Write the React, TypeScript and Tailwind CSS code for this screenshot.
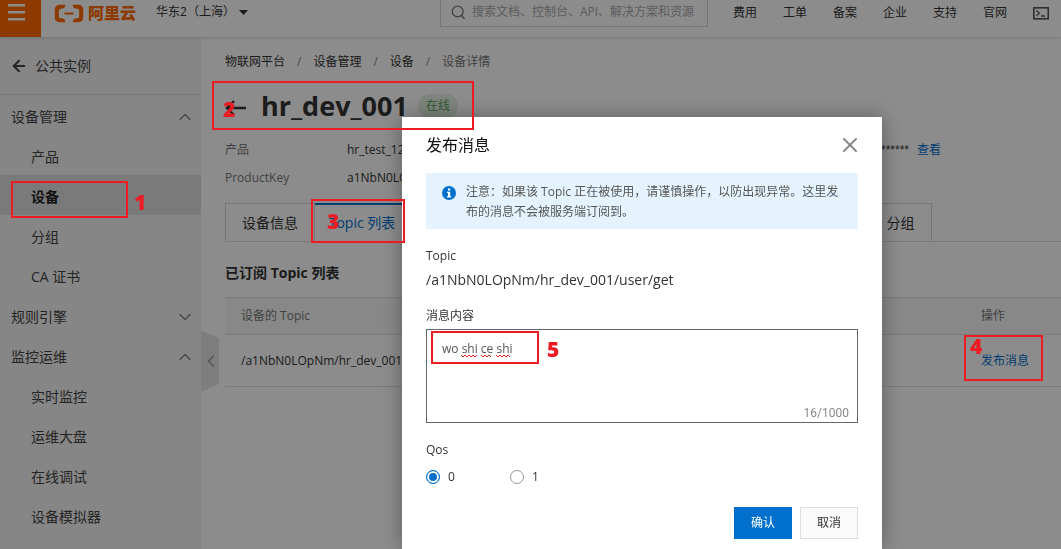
import React, { useState } from "react";
import clsx from "clsx";
import { ArrowLeft, ChevronDown, ChevronLeft, ChevronUp, X } from "lucide-react";

const topLinks = ["费用", "工单", "备案", "企业", "支持", "官网"];

const menu = [
	{ name: "设备管理", open: true, items: ["产品", "设备", "分组", "CA 证书"] },
	{ name: "规则引擎", open: false, items: [] },
	{
		name: "监控运维",
		open: true,
		items: ["实时监控", "运维大盘", "在线调试", "设备模拟器"],
	},
];

const breadcrumbs = ["物联网平台", "设备管理", "设备"];

const marks = [
	{
		label: "1",
		box: "left-[11px] top-[181px] w-[117px] h-[37px]",
		text: "left-[134px] top-[192px]",
	},
	{
		label: "2",
		box: "left-[212px] top-[81px] w-[262px] h-[49px]",
		text: "left-[223px] top-[99px]",
	},
	{
		label: "3",
		box: "left-[311px] top-[199px] w-[94px] h-[44px]",
		text: "left-[327px] top-[211px]",
	},
	{
		label: "4",
		box: "left-[964px] top-[335px] w-[79px] h-[46px]",
		text: "left-[970px] top-[336px]",
	},
	{
		label: "5",
		box: "left-[431px] top-[331px] w-[108px] h-[33px]",
		text: "left-[547px] top-[339px]",
	},
];

const Logo = () => (
	<a href="#" className="ml-[13px] flex h-6 items-center gap-1 text-[#ff6a00]">
		<svg width="30" height="19" viewBox="0 0 30 19" fill="none" className="mt-[2px]">
			<path
				d="M11.5 0.8H5.5C2.8 0.8 0.8 2.7 0.8 5.2V13.8C0.8 16.3 2.8 18.2 5.5 18.2H11.5L10.2 14.9L6.2 14C5.3 13.8 4.9 13.2 4.9 12.4V6.6C4.9 5.8 5.3 5.2 6.2 5L10.2 4.1Z"
				fill="currentColor"
			/>
			<path
				d="M18.5 0.8H24.5C27.2 0.8 29.2 2.7 29.2 5.2V13.8C29.2 16.3 27.2 18.2 24.5 18.2H18.5L19.8 14.9L23.8 14C24.7 13.8 25.1 13.2 25.1 12.4V6.6C25.1 5.8 24.7 5.2 23.8 5L19.8 4.1Z"
				fill="currentColor"
			/>
			<path d="M10.5 9.5H19.5" stroke="currentColor" strokeWidth="2" />
		</svg>
		<span className="pt-px text-base font-black leading-6">阿里云</span>
	</a>
);

const Header = () => (
	<header className="relative z-10 flex h-[37px] shrink-0 items-start bg-white text-xs text-[#333] shadow-[0_1px_4px_rgba(0,0,0,0.15)]">
		<button
			aria-label="菜单"
			className="flex h-[37px] w-[41px] justify-center bg-[#ff6a00] pt-1 pr-2 text-white"
		>
			<svg width="17" height="17" viewBox="0 0 17 17" fill="currentColor">
				<path d="M0 0h17v2.5H0zM0 7h17v2.5H0zM0 14h17v2.5H0z" />
			</svg>
		</button>
		<Logo />
		<button className="ml-5 flex h-6 items-center gap-1">
			华东2（上海）
			<svg width="9" height="5" viewBox="0 0 9 5" fill="currentColor">
				<path d="M0 0h9L4.5 5z" />
			</svg>
		</button>
		<label className="ml-auto flex h-[27px] w-[268px] items-center gap-[6px] border border-t-0 border-[#d5d5d5] pb-[2px] pl-[10px] text-[#777]">
			<svg width="15" height="15" viewBox="0 0 15 15" fill="none" stroke="currentColor" strokeWidth="1.3">
				<circle cx="6.7" cy="6.5" r="5.4" />
				<path d="M10.5 10.5L13.5 14" />
			</svg>
			<input
				aria-label="搜索"
				placeholder="搜索文档、控制台、API、解决方案和资源"
				className="min-w-0 flex-1 outline-none placeholder:text-[#aaa]"
			/>
		</label>
		<nav className="ml-[25px] flex h-6 items-center gap-[26px] pt-[2px] pr-3">
			{topLinks.map((link) => (
				<a key={link} href="#">
					{link}
				</a>
			))}
			<a href="#" aria-label="命令行" className="text-[#555]">
				<svg width="16" height="13" viewBox="0 0 16 13" fill="none" stroke="currentColor">
					<rect x="0.8" y="0.8" width="14.4" height="11" strokeWidth="1.6" />
					<path d="M3.5 3.5L6.3 6.2L3.5 8.9M8 9h4" strokeWidth="1.3" />
				</svg>
			</a>
		</nav>
	</header>
);

const Sidebar = () => (
	<aside className="relative w-[201px] shrink-0 bg-[#f4f4f4] text-sm text-[#444]">
		<a
			href="#"
			className="flex h-[58px] items-center gap-[7px] border-b border-[#d8d8d8] pl-[10px]"
		>
			<ArrowLeft size={18} strokeWidth={2.6} />
			公共实例
		</a>
		{menu.map((group) => (
			<div key={group.name}>
				<button className="flex h-10 w-full items-center justify-between pt-1 pr-[6px] pl-[11px]">
					{group.name}
					{group.open ? (
						<ChevronUp size={20} strokeWidth={1.8} className="text-[#888]" />
					) : (
						<ChevronDown size={20} strokeWidth={1.8} className="text-[#888]" />
					)}
				</button>
				{group.items.map((item) => (
					<a
						key={item}
						href="#"
						className={clsx(
							"flex h-10 items-center pt-1 pl-[31px]",
							item === "设备" && "bg-[#dedede] font-bold text-[#222]"
						)}
					>
						{item}
					</a>
				))}
			</div>
		))}
		<button
			aria-label="收起"
			className="absolute top-[293px] left-full h-[62px] w-[18px] text-[#999]"
		>
			<svg width="18" height="62" viewBox="0 0 18 62" className="absolute inset-0">
				<path d="M0 0L18 8V54L0 62Z" fill="#e6e6e6" />
			</svg>
			<ChevronLeft size={20} strokeWidth={1.8} className="relative" />
		</button>
	</aside>
);

const DevicePage = () => (
	<main className="min-w-0 flex-1 bg-white pl-6 text-xs text-[#333]">
		<nav className="flex h-[50px] items-center gap-3">
			{breadcrumbs.map((crumb) => (
				<React.Fragment key={crumb}>
					<a href="#">{crumb}</a>
					<span className="text-[#888]">/</span>
				</React.Fragment>
			))}
			<span className="text-[#777]">设备详情</span>
		</nav>
		<div className="flex h-[38px] items-center gap-[10px]">
			<a href="#" aria-label="返回" className="mt-1 mr-1">
				<svg width="22" height="16" viewBox="0 0 22 16" fill="none" stroke="currentColor" strokeWidth="2.4">
					<path d="M9 1L2 8L9 15M2 8H21" />
				</svg>
			</a>
			<h1 className="text-[27px] leading-[38px] font-bold">hr_dev_001</h1>
			<span className="flex h-6 items-center rounded-full bg-[#e3f2e3] px-2 text-[#5aa65a]">
				在线
			</span>
		</div>
		<div className="mt-[11px] flex pr-30 leading-7">
			<dl className="grid grid-cols-[122px_auto]">
				<dt className="text-[#777]">产品</dt>
				<dd>hr_test_122</dd>
				<dt className="text-[#777]">ProductKey</dt>
				<dd>a1NbN0LO</dd>
			</dl>
			<p className="ml-auto">
				<span className="font-['Liberation_Sans']">********</span>
				<a href="#" className="ml-2 text-[#0070cc]">
					查看
				</a>
			</p>
		</div>
		<div className="mt-[11px] flex h-[39px] border-b border-[#dedede] text-sm">
			<button className="border border-b-0 border-[#d5d5d5] px-4">
				设备信息
			</button>
			<button className="w-[94px] border-t-2 border-[#0070cc] text-[#0070cc]">
				Topic 列表
			</button>
			<div className="w-[461px] border border-b-0 border-[#d5d5d5]" />
			<button className="w-[62px] border border-b-0 border-l-0 border-[#d5d5d5]">
				分组
			</button>
		</div>
		<h2 className="pt-[21px] pb-[14px] text-sm font-bold">
			已订阅 Topic 列表
		</h2>
		<table className="w-full table-fixed border-t border-[#dedede] text-left">
			<thead>
				<tr className="h-[37px] border-b border-[#dedede] bg-[#f8f8f8] text-[#777]">
					<th className="pl-4 font-normal">设备的 Topic</th>
					<th className="w-24 pl-4 font-normal">操作</th>
				</tr>
			</thead>
			<tbody>
				<tr className="h-[52px] border-b border-[#dedede]">
					<td className="pl-4">/a1NbN0LOpNm/hr_dev_001/user/get</td>
					<td className="pl-4">
						<a href="#" className="text-[#0070cc]">
							发布消息
						</a>
					</td>
				</tr>
			</tbody>
		</table>
	</main>
);

const PublishModal = () => {
	const [message, setMessage] = useState<string>("wo shi ce shi");
	const [qos, setQos] = useState<number>(0);

	return (
		<div className="fixed inset-0 z-20 flex bg-black/45 pt-[117px] pl-[402px]">
			<div
				role="dialog"
				aria-label="发布消息"
				className="w-[480px] bg-white px-6 pt-4 text-xs text-[#333] shadow-[0_0_20px_rgba(0,0,0,0.35)]"
			>
				<div className="flex h-6 items-center justify-between text-base text-[#111]">
					<h2>发布消息</h2>
					<button aria-label="关闭" className="-mr-1 text-[#888]">
						<X size={24} strokeWidth={2} />
					</button>
				</div>
				<div className="mt-4 flex gap-[10px] bg-[#e4f3fe] px-4 pt-[9px] pb-[7px] leading-5 text-[#555]">
					<svg width="14" height="14" viewBox="0 0 14 14" className="mt-1 shrink-0">
						<circle cx="7" cy="7" r="7" fill="#0070cc" />
						<path d="M6 2.5h2.2v2H6zM5 5.7h3.2v4.5H9.3v1.3H4.9v-1.3H6V7H5z" fill="#fff" />
					</svg>
					<p>
						注意：如果该 Topic 正在被使用，请谨慎操作，以防出现异常。这里发布的消息不会被服务端订阅到。
					</p>
				</div>
				<p className="mt-[17px] leading-5">Topic</p>
				<p className="mt-1 text-sm leading-5">
					/a1NbN0LOpNm/hr_dev_001/user/get
				</p>
				<label htmlFor="message" className="mt-4 block leading-5">
					消息内容
				</label>
				<div className="relative mt-[3px]">
					<textarea
						id="message"
						spellCheck={false}
						value={message}
						onChange={(e) => setMessage(e.target.value)}
						className="block h-[94px] w-full resize-none border border-[#666] px-[15px] py-[9px] leading-5 text-[#555] outline-none"
					/>
					<svg
						width="52"
						height="4"
						viewBox="0 0 52 4"
						fill="none"
						stroke="#e02020"
						className="absolute top-[25px] left-[35px]"
					>
						<path d="M0 1l2 2 2-2 2 2 2-2 2 2 2-2 2 2 2-2M20 1l2 2 2-2 2 2 2-2 2 2M35 1l2 2 2-2 2 2 2-2 2 2 2-2 2 2" />
					</svg>
					<span className="absolute right-[9px] bottom-0 font-[Roboto] leading-5 text-[#888]">
						16/1000
					</span>
				</div>
				<fieldset className="mt-[17px]">
					<legend className="leading-5">Qos</legend>
					<div className="mt-[7px] flex gap-[55px]">
						{[0, 1].map((level) => (
							<label key={level} className="flex items-center gap-2 leading-5">
								<input
									type="radio"
									name="qos"
									checked={qos === level}
									onChange={() => setQos(level)}
									className="size-[14px] appearance-none rounded-full border border-[#999] bg-white checked:border-[#0070cc] checked:bg-[#0070cc] checked:shadow-[inset_0_0_0_2px_#fff]"
								/>
								{level}
							</label>
						))}
					</div>
				</fieldset>
				<div className="mt-5 flex justify-end gap-2">
					<button className="h-8 w-[58px] bg-[#0070cc] text-white">确认</button>
					<button className="h-8 w-[58px] border border-[#ddd] bg-[#fafafa]">
						取消
					</button>
				</div>
			</div>
		</div>
	);
};

// Numbered red boxes that show the order of the steps
const Marks = () => (
	<div className="pointer-events-none fixed inset-0 z-30 text-[#ed1c24]">
		{marks.map((mark) => (
			<React.Fragment key={mark.label}>
				<div className={clsx("absolute border-2 border-[#ed1c24]", mark.box)} />
				<span
					className={clsx(
						"absolute text-[21px] leading-5 font-extrabold",
						mark.text
					)}
				>
					{mark.label}
				</span>
			</React.Fragment>
		))}
	</div>
);

const App = () => {
	return (
		<div className="flex h-screen flex-col overflow-hidden font-['Open_Sans','Noto_Sans_CJK_SC',sans-serif]">
			<Header />
			<div className="flex min-h-0 flex-1">
				<Sidebar />
				<DevicePage />
			</div>
			<PublishModal />
			<Marks />
		</div>
	);
};

export default App;
